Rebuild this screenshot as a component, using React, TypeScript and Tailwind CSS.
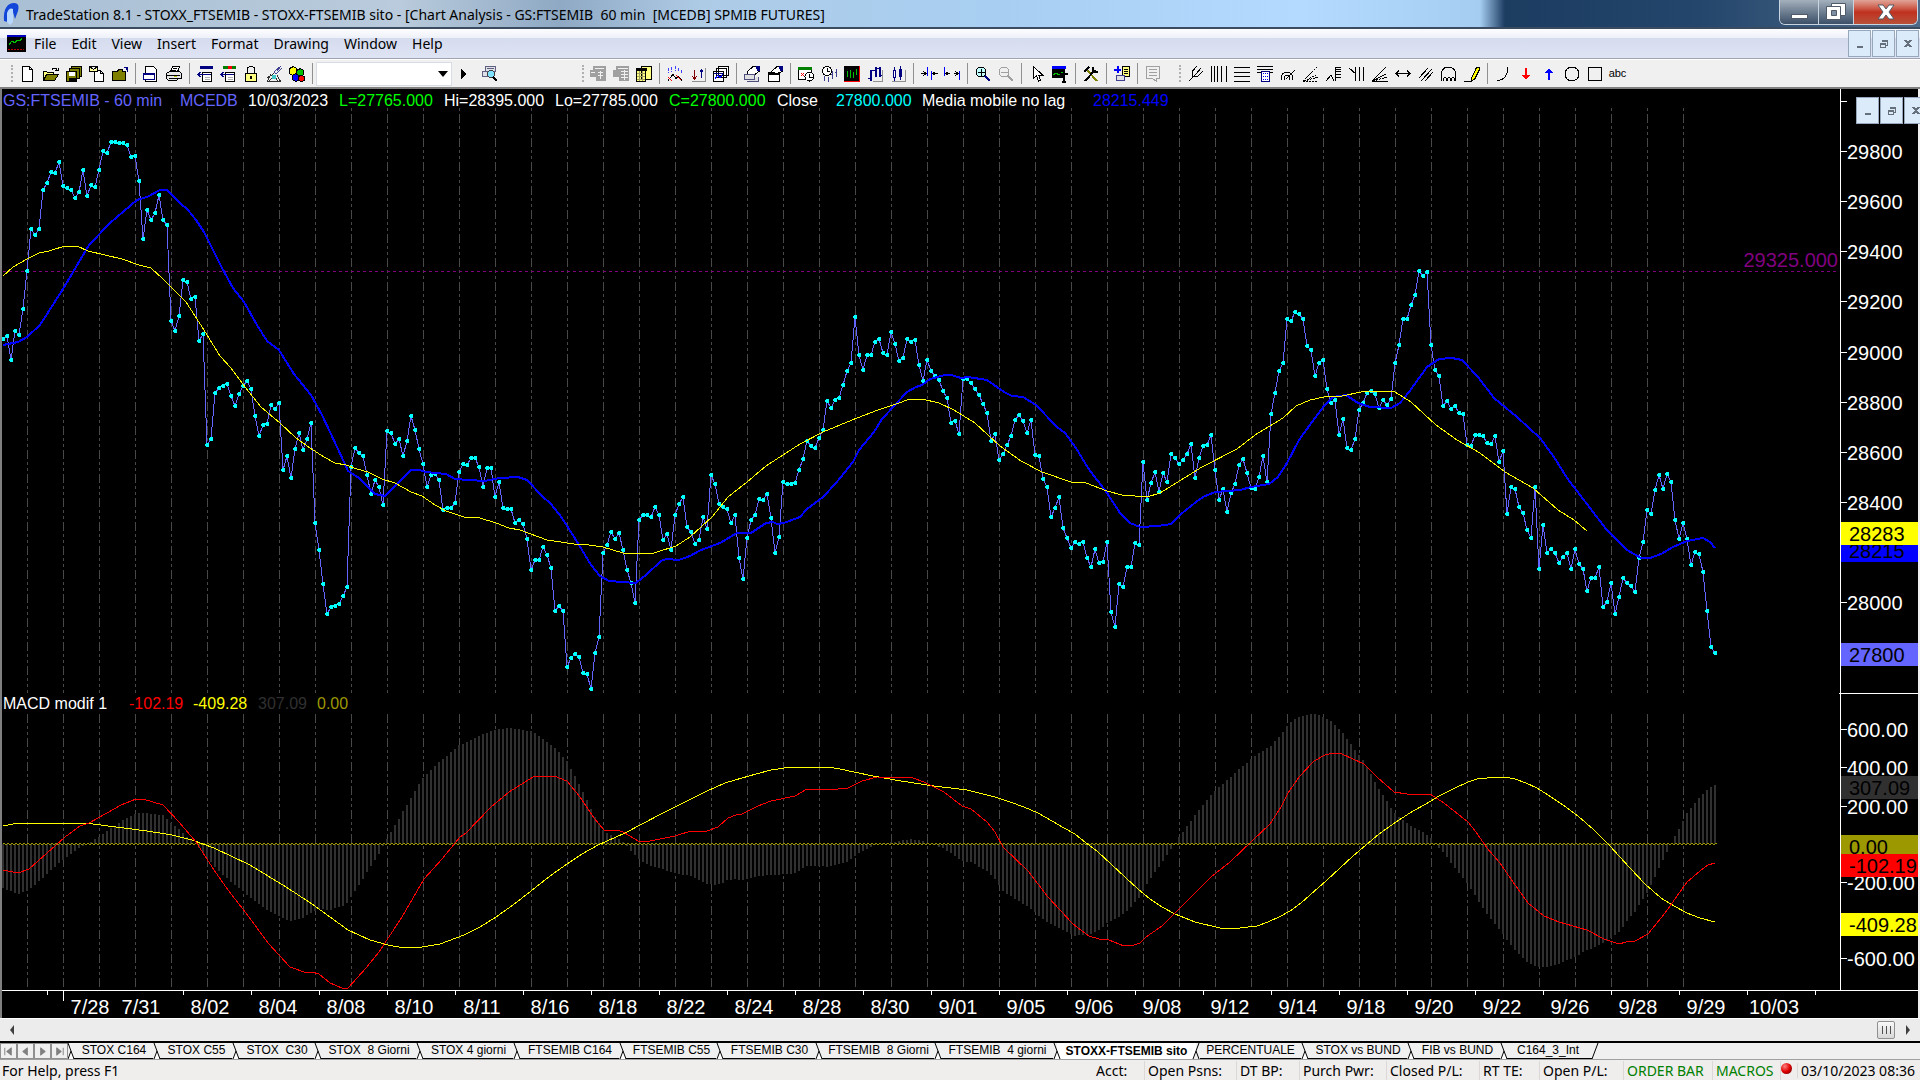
import { Fragment, ReactNode } from 'react';

// vertical position of every 60 min close, one bar each 4 units
const closes = [
  339, 336, 360, 331, 335, 309, 271, 229, 235, 229, 190, 183, 172, 173, 162, 186, 188, 190, 198, 192, 170, 196, 185,
  187, 170, 151, 153, 142, 142, 143, 143, 145, 157, 156, 181, 239, 210, 220, 213, 195, 220, 225, 321, 331, 316, 280,
  282, 299, 297, 341, 334, 445, 439, 393, 388, 386, 384, 396, 406, 394, 386, 381, 389, 416, 436, 425, 424, 405, 409,
  403, 470, 456, 478, 449, 433, 450, 439, 423, 523, 550, 584, 614, 607, 606, 604, 596, 587, 467, 448, 453, 456, 475,
  494, 480, 487, 505, 431, 433, 444, 439, 456, 441, 416, 430, 449, 464, 487, 475, 474, 480, 510, 508, 508, 503, 472,
  464, 465, 458, 458, 467, 487, 468, 468, 497, 482, 508, 509, 509, 523, 520, 524, 539, 570, 560, 560, 547, 555, 568,
  611, 606, 611, 667, 658, 654, 657, 673, 674, 689, 653, 637, 553, 545, 532, 539, 533, 550, 570, 583, 603, 520, 515,
  515, 517, 507, 515, 540, 534, 550, 515, 504, 497, 527, 532, 544, 540, 517, 529, 475, 484, 504, 507, 509, 523, 515,
  558, 579, 538, 520, 515, 499, 500, 494, 518, 553, 537, 482, 484, 484, 483, 470, 459, 441, 446, 448, 438, 430, 401,
  408, 400, 398, 385, 371, 363, 317, 355, 370, 355, 355, 342, 339, 353, 355, 332, 344, 361, 358, 339, 342, 340, 365,
  381, 360, 371, 376, 380, 391, 398, 423, 421, 434, 379, 379, 383, 389, 395, 404, 413, 441, 434, 460, 454, 445, 436,
  420, 415, 421, 433, 420, 455, 456, 479, 487, 517, 508, 497, 528, 538, 548, 542, 544, 542, 558, 567, 549, 563, 562,
  542, 612, 627, 584, 587, 567, 567, 543, 545, 462, 500, 483, 472, 492, 473, 482, 454, 458, 464, 460, 454, 444, 478,
  458, 446, 445, 435, 470, 500, 489, 512, 493, 484, 465, 459, 473, 488, 489, 477, 456, 482, 414, 393, 371, 363, 319,
  321, 312, 314, 319, 346, 350, 376, 363, 360, 389, 403, 400, 435, 419, 448, 450, 439, 410, 403, 393, 391, 394, 408,
  400, 405, 399, 363, 345, 319, 319, 305, 295, 271, 276, 272, 345, 370, 376, 406, 401, 409, 406, 413, 414, 445, 446,
  435, 435, 436, 443, 444, 436, 462, 451, 514, 487, 489, 507, 513, 530, 538, 487, 569, 525, 553, 549, 553, 563, 557,
  553, 569, 549, 564, 569, 591, 578, 578, 567, 607, 602, 583, 614, 597, 578, 583, 586, 592, 558, 542, 510, 514, 490,
  475, 489, 474, 482, 520, 539, 523, 539, 565, 552, 554, 572, 611, 647, 653,
];

const mediaMobile =
  '3,345 18,342 27,337 40,325 63,289 89,245 110,223 137,200 147,197 160,190 167,190 180,203 188,210 196,220 204,232 214,252 222,268 233,288 244,302 257,325 267,341 279,350 294,374 311,395 322,415 330,432 344,462 348,471 359,478 375,494 385,496 395,486 411,470 419,470 426,472 446,474 455,479 484,481 500,478 518,477 527,480 542,496 551,504 562,518 576,540 591,565 600,576 609,581 636,583 647,574 661,561 666,559 679,560 690,556 701,550 720,543 737,533 751,533 766,523 773,522 777,524 784,523 800,517 807,509 823,497 836,483 853,462 859,450 874,432 882,419 895,405 907,392 916,387 922,385 930,379 945,375 951,375 961,378 968,377 987,380 1004,392 1012,396 1023,397 1036,405 1057,427 1065,433 1076,448 1088,468 1107,493 1120,513 1130,523 1140,527 1158,526 1171,524 1181,514 1196,502 1203,497 1215,492 1240,490 1251,487 1269,484 1278,477 1287,463 1299,440 1312,422 1324,406 1333,397 1346,395 1358,403 1370,407 1391,408 1400,403 1409,392 1427,367 1439,359 1452,358 1462,360 1478,377 1494,398 1517,417 1540,438 1554,457 1567,478 1590,508 1606,529 1627,550 1641,558 1650,558 1661,554 1673,547 1687,541 1703,538 1710,542 1715,548';

const centred =
  '3,276 13,267 27,259 39,253 49,251 65,246 77,246 88,251 122,259 139,265 151,268 163,279 186,302 204,330 220,356 231,368 245,387 261,407 280,423 296,438 310,448 324,457 335,463 346,465 357,469 368,472 382,479 395,483 411,492 422,496 435,505 446,511 464,517 480,518 496,523 509,528 520,530 547,540 574,544 589,545 603,547 623,553 654,553 676,546 690,537 712,517 728,497 747,482 766,466 800,444 823,432 857,418 878,410 899,403 907,400 922,399 939,403 954,410 975,423 1000,446 1021,461 1042,472 1071,482 1086,483 1107,491 1122,495 1147,497 1160,493 1181,480 1202,467 1237,449 1255,435 1283,418 1296,406 1310,400 1324,397 1342,396 1361,392 1374,391 1395,392 1411,402 1436,425 1457,440 1480,453 1505,472 1533,488 1558,510 1574,520 1587,531';

const macdSlow =
  '3,826 18,823 85,823 116,827 147,831 172,835 192,840 214,848 250,865 286,887 312,904 330,917 348,930 370,940 388,945 404,948 422,947 440,944 464,935 480,927 496,917 513,905 531,891 550,876 567,864 582,854 598,845 625,833 661,814 675,807 707,791 725,783 742,778 756,774 771,770 791,767 828,767 840,769 854,772 873,776 901,781 934,786 967,790 995,797 1010,802 1024,807 1038,813 1052,821 1064,828 1075,834 1086,843 1097,851 1126,878 1138,889 1150,899 1162,907 1175,914 1195,922 1220,928 1240,928 1257,926 1268,922 1279,917 1290,911 1301,903 1327,880 1353,856 1366,845 1379,834 1396,822 1413,811 1426,804 1439,796 1453,789 1468,782 1477,779 1487,778 1505,777 1515,779 1526,783 1537,788 1548,795 1563,805 1578,816 1594,830 1609,845 1630,868 1645,884 1661,898 1674,906 1687,913 1700,918 1715,922';

const macdFast =
  '3,870 18,873 29,869 47,853 65,837 80,826 89,823 107,813 121,805 136,799 143,799 163,805 179,822 196,842 214,870 228,890 246,913 268,943 290,967 304,972 312,972 319,974 330,983 342,988 348,988 366,968 379,952 402,917 424,879 442,859 460,837 466,833 491,807 509,792 533,777 554,776 567,781 580,797 594,818 604,830 618,830 625,833 638,841 650,841 675,836 691,831 707,831 718,827 728,818 736,815 742,814 758,806 771,801 795,796 807,789 820,789 828,790 848,788 862,781 877,777 913,778 924,782 944,792 962,806 971,809 987,822 995,832 1003,847 1028,871 1048,897 1073,924 1089,936 1099,939 1109,940 1124,946 1134,945 1140,943 1146,937 1162,926 1187,901 1211,877 1230,862 1252,841 1270,824 1281,807 1288,793 1299,777 1314,761 1325,755 1333,753 1342,754 1364,764 1377,777 1394,792 1407,794 1430,794 1444,803 1468,822 1476,832 1487,848 1500,863 1513,882 1528,903 1544,916 1559,922 1587,930 1604,939 1619,944 1626,942 1635,941 1648,934 1665,913 1687,882 1700,871 1708,865 1715,863';

const barX = (index: number) => 3 + index * 4;

const parse = (points: string) => points.split(' ').map((point) => point.split(',').map(Number));

const valueAt = (points: number[][], x: number) => {
  const next = points.findIndex((point) => point[0] >= x);
  if (next <= 0) return points[0][1];
  const [x0, y0] = points[next - 1];
  const [x1, y1] = points[next];
  return y0 + ((y1 - y0) * (x - x0)) / (x1 - x0);
};

const ZERO = 844;
const slow = parse(macdSlow);
const fast = parse(macdFast);
const histogram = closes
  .map((_, index) => {
    const x = barX(index);
    const height = Math.round(valueAt(fast, x) - valueAt(slow, x));
    return `M${x - 1} ${ZERO}h2v${height}h-2z`;
  })
  .join('');
const priceLine = closes.map((y, index) => `${barX(index)},${y}`).join(' ');
const priceMarks = closes.map((y, index) => `M${barX(index) - 1} ${y - 2}h3v4h-3v-1h-1v-2h1z`).join('');

const gridLines = Array.from({ length: 47 }, (_, index) => 27 + index * 36);

const priceLabels = [
  { label: '', y: 101 },
  { label: '29800', y: 151 },
  { label: '29600', y: 201 },
  { label: '29400', y: 251 },
  { label: '29200', y: 301 },
  { label: '29000', y: 352 },
  { label: '28800', y: 402 },
  { label: '28600', y: 452 },
  { label: '28400', y: 502 },
  { label: '28000', y: 602 },
  { label: '600.00', y: 729 },
  { label: '400.00', y: 767 },
  { label: '200.00', y: 806 },
  { label: '-200.00', y: 882 },
  { label: '-600.00', y: 958 },
];

const priceTags = [
  { label: '28215', y: 539, fill: '#0000ff' },
  { label: '28283', y: 522, fill: '#ffff00' },
  { label: '27800', y: 643, fill: '#6464ff' },
  { label: '307.09', y: 776, fill: '#303030' },
  { label: '0.00', y: 835, fill: '#9c9800' },
  { label: '-102.19', y: 854, fill: '#ff0000' },
  { label: '-409.28', y: 913, fill: '#ffff00' },
];

const dateLabels = [
  '8/02', '8/04', '8/08', '8/10', '8/11', '8/16', '8/18', '8/22', '8/24', '8/28', '8/30', '9/01',
  '9/05', '9/06', '9/08', '9/12', '9/14', '9/18', '9/20', '9/22', '9/26', '9/28', '9/29', '10/03',
];

const Chart = () => (
  <svg viewBox="2 89 1916 929" className="block w-full" fontFamily="Liberation Sans, Arial, sans-serif" fontSize="20">
    <g shapeRendering="crispEdges" fill="none">
      <g stroke="#484848">
        {gridLines.map((x) => (
          <Fragment key={x}>
            <path d={`M${x + 0.5} 108V693`} strokeDasharray="9 3 3 3 3 3" strokeDashoffset="18" />
            <path d={`M${x + 0.5} 714V987`} strokeDasharray="9 3 3 3 3 3" />
          </Fragment>
        ))}
      </g>
      <path d={histogram} fill="#303030" />
      <path d="M3 843.5H1717" stroke="#9c9800" strokeDasharray="2 2" />
      <path d="M5 844.5H1717" stroke="#9c9800" strokeDasharray="2 2" />
      <path d="M3 271.5H1836" stroke="#800080" strokeDasharray="3 3" />
      <polyline points={macdSlow} stroke="#ffff00" />
      <polyline points={macdFast} stroke="#ff0000" />
      <polyline points={priceLine} stroke="#6464ff" />
      <path d={priceMarks} fill="#00ffff" />
      <polyline points={mediaMobile} stroke="#0000ff" strokeWidth="2" />
      <polyline points={centred} stroke="#ffff00" />
      <path d="M1840.5 89V990.5M2 990.5H1918M1839 693.5H1918" stroke="#ffffff" />
      <path d="M47.5 990v5M63.5 990v11" stroke="#ffffff" />
      {Array.from({ length: 25 }, (_, index) => (
        <path key={index} d={`M${183.5 + index * 68} 990v5`} stroke="#ffffff" />
      ))}
    </g>
    <text x="1838" y="267" textAnchor="end" fill="#800080">
      29325.000
    </text>
    <g fill="#ffffff">
      {priceLabels.map(({ label, y }) => (
        <Fragment key={y}>
          <rect x="1841" y={y} width="6" height="1" />
          <text x="1847" y={y + 8}>
            {label}
          </text>
        </Fragment>
      ))}
    </g>
    {priceTags.map(({ label, y, fill }) => (
      <Fragment key={label}>
        <rect x="1841" y={y} width="77" height="23" fill={fill} />
        <text x="1849" y={y + 19} fill="#000000">
          {label}
        </text>
      </Fragment>
    ))}
    <g fill="#ffffff" textAnchor="middle">
      <text x="90" y="1014">
        7/28
      </text>
      <text x="141" y="1014">
        7/31
      </text>
      {dateLabels.map((label, index) => (
        <text key={label} x={210 + index * 68} y="1014">
          {label}
        </text>
      ))}
    </g>
  </svg>
);

const Icon = ({ children, label }: { children: ReactNode; label: string }) => (
  <button type="button" aria-label={label} className="flex w-[23px] shrink-0 items-center justify-center">
    <svg viewBox="0 0 16 16" className="size-4 overflow-visible" shapeRendering="crispEdges" fill="none" stroke="#000">
      {children}
    </svg>
  </button>
);

const Separator = () => (
  <div className="flex w-2 shrink-0 justify-center py-[2px]">
    <div className="w-px bg-[#909090]" />
  </div>
);

const Grip = () => <div className="my-1 w-[2px] shrink-0 border-l-2 border-dotted border-[#b0b0b0]" />;

const MainTools = () => (
  <>
    <Icon label="New">
      <path d="M2.5 .5h7l3 3v12h-10zM9.5 .5v3h3" fill="#fff" />
    </Icon>
    <Icon label="Open">
      <path d="M.5 14.5v-9h3l1 1h6v2" fill="#ffff80" />
      <path d="M.5 14.5l3-6h12l-4 6z" fill="#808000" />
      <path d="M9 3.5q3-3 5 0M12 4.5h3v-3" />
    </Icon>
    <Icon label="Save all">
      <path d="M5.5 .5h10v10h-10z" fill="#808000" />
      <path d="M3.5 2.5h10v10h-10z" fill="#808000" />
      <path d="M.5 5.5h10v10h-10z" fill="#808000" />
      <path d="M3 6h6v4h-6z" fill="#fff" stroke="none" />
      <path d="M3 12h6v3h-6z" fill="#000" />
    </Icon>
    <Icon label="Send">
      <path d="M5.5 4.5h6l3 3v8h-9zM11.5 4.5v3h3" fill="#fff" />
      <path d="M.5 .5h8v5h-8zM.5 .5l4 3 4-3" fill="#ffffa0" />
    </Icon>
    <Icon label="Close folder">
      <path d="M.5 14.5v-9h5l1-2h4v2h3v9z" fill="#808000" />
      <path d="M15.5 6V1.5M12 1.5h4M14 3.5l2-2" stroke="#000080" />
    </Icon>
    <Separator />
    <Icon label="Page setup">
      <path d="M2.5 .5h8l3 3v12h-11z" fill="#fff" />
      <path d="M.5 7.5h11v6h-11z" fill="#fff" stroke="#000080" />
      <path d="M0 7h12v2H0z" fill="#000080" stroke="none" />
    </Icon>
    <Icon label="Print">
      <path d="M4.5 6l2-5.5h7l-2 5.5M7 2.5h4M6 4.5h4" fill="#fff" />
      <path d="M.5 7.5l3-2h10l2 2v5h-3l-2 2h-8l-2-2z" fill="#e8e8e8" />
      <path d="M1 9.5h13M3 12.5h9" />
      <path d="M8 10.5h3" stroke="#c0c000" />
    </Icon>
    <Separator />
    <Icon label="Insert row">
      <path d="M3 0h13v3H3z" fill="#000080" stroke="none" />
      <path d="M5.5 6.5h9v9h-9z" fill="#fff" />
      <path d="M5 8h9M8 8.5H1M3.5 6L1 8.5 3.5 11" stroke="#000080" />
      <path d="M8 11.5h5M8 13.5h5" stroke="#b0b0b0" />
    </Icon>
    <Icon label="Format row">
      <path d="M3 0h5v3H3zM12 0h4v3h-4z" fill="#008000" stroke="none" />
      <path d="M8 0h4v3H8z" fill="#ff0000" stroke="none" />
      <path d="M5.5 6.5h9v9h-9z" fill="#fff" />
      <path d="M5 8h9M8 8.5H1M3.5 6L1 8.5 3.5 11" stroke="#000080" />
      <path d="M8 11.5h5M8 13.5h5" stroke="#b0b0b0" />
    </Icon>
    <Icon label="Lock">
      <path d="M4.5 7V3q0-2.5 3.5-2.5T11.5 3v4" />
      <path d="M2.5 7.5h11v8h-11z" fill="#ffff80" />
      <path d="M7 10h2v3H7z" fill="#000" stroke="none" />
    </Icon>
    <Icon label="Satellite">
      <path d="M15 0L8 6l2 2 6-6M11 5l3-3" stroke="#404090" />
      <path d="M8 7.5L1 12M5 8L1.5 15.500h13L11 9M3 15l5-5 4 5" stroke="#303030" />
      <path d="M6 9h4v4H6z" fill="#40c8c8" stroke="none" />
    </Icon>
    <Icon label="Color blocks">
      <path d="M.5 2.5l4-2 3 2v5l-4 2-3-2z" fill="#ffff00" />
      <path d="M7.5 4.5l4-2 3 2v4l-3 2-4-2z" fill="#00c000" />
      <path d="M3.5 9.5l3-2 3 2v5l-3 1-3-2z" fill="#0000ff" />
      <path d="M9.5 10.5l3-1 3 1v4l-3 1-3-1z" fill="#ff0000" />
    </Icon>
    <Separator />
  </>
);

const ChartTools = () => (
  <>
    <Icon label="Quote">
      <path d="M3 0h13v15H6v-4H0V4h3z" fill="#a0a0a0" stroke="none" />
      <path d="M5 2h9M1 6h4M8 6.5h5M8 9.5h5M10.5 5v8" stroke="#f0f0f0" />
    </Icon>
    <Icon label="Orders">
      <path d="M3 0h13v15H6v-4H0V4h3z" fill="#a0a0a0" stroke="none" />
      <path d="M5 2.5h10M8 5.5h7M8 8.5h7M8 11.5h7M11.5 4v10" stroke="#f0f0f0" />
    </Icon>
    <Icon label="Table">
      <path d="M5.5 .5h10v13h-10zM.5 2.5h9v13h-9z" fill="#ffff80" />
      <path d="M0 2h10v2H0z" fill="#000" />
      <path d="M3.5 5v10M6.5 5v10M1 7.5h8M1 10.5h8M1 13.5h8" stroke="#a0a060" />
    </Icon>
    <Separator />
    <Icon label="Indicator">
      <path d="M1.5 2v5M4.5 1v5M8.5 0v5M11.5 2v4M14.5 4v4" stroke="#4040ff" strokeDasharray="3 1" />
      <path d="M1 14.5l5-6 3 4 2-2 4 4" />
      <path d="M1 11l4 4M9 9l5 5" stroke="#ff0000" />
    </Icon>
    <Icon label="Trades">
      <path d="M4.5 4v9M2.5 10.5l2 2.5 2-2.5" stroke="#800000" />
      <path d="M11.5 12V4M9.5 6.5l2-2.5 2 2.5" stroke="#000080" />
      <path d="M15.5 2v13.5H2" stroke="#909090" />
    </Icon>
    <Icon label="Windows">
      <path d="M5.5 .5h10v9h-10zM3.5 2.5h10v9h-10zM.5 5.5h10v10h-10z" fill="#fff" />
      <path d="M1 7h9" stroke="#000080" />
      <path d="M2 13l3-4 2 3 3-4" stroke="#0000ff" />
    </Icon>
    <Separator />
    <Icon label="Format symbol">
      <path d="M3 6l6-5.5h6v5l-4 3-6 1z" fill="#fff" />
      <path d="M12 0h4v5h-3z" fill="#000080" stroke="none" />
      <path d="M.5 8.5h10v5h-10zM3 15.5h11v-5" stroke="#505080" fill="#e0e0e0" />
    </Icon>
    <Icon label="Format window">
      <path d="M1.5 6.5h11v9h-11z" fill="#fff" />
      <path d="M1 6h12v3H1z" fill="#000" stroke="none" />
      <path d="M4 6l6-5.5h5v5l-5 2z" fill="#fff" />
      <path d="M12 0h4v5h-3z" fill="#000080" stroke="none" />
    </Icon>
    <Separator />
    <Icon label="Session">
      <path d="M.5 2.5h13v11H.5z" fill="#fff" />
      <path d="M0 1h14v3H0z" fill="#008000" stroke="none" />
      <path d="M3 7l3 3M3 10l3-3" stroke="#ff0000" />
      <circle cx="11.5" cy="10.5" r="4.5" fill="#fff" />
      <path d="M11.5 8v3h3" />
    </Icon>
    <Icon label="Interval">
      <circle cx="6" cy="5" r="4.5" fill="#fff" />
      <path d="M6 2v3h3" />
      <path d="M3.5 10v5M7.5 11v5M11.5 5v8M15.5 3v8M10 8h2M14 6h2" stroke="#404090" />
    </Icon>
    <Icon label="Bar chart">
      <path d="M0 0h15v15H0z" fill="#000" stroke="none" />
      <path d="M3.5 5v6M6.5 4v8M9.5 6v6M12.5 3v6" stroke="#00c000" />
      <path d="M0 15.5h15.5V0" stroke="#ff0000" />
    </Icon>
    <Icon label="Candle">
      <path d="M3.5 4v11M8.5 1v10M12.5 1v10" stroke="#000080" strokeWidth="2" />
      <path d="M1 12.5h3M5 4.5h3M9 2.5h4M12 9.5h3" stroke="#000080" />
      <path d="M15.5 4v11.5H6" stroke="#909090" />
    </Icon>
    <Icon label="Candlestick">
      <path d="M4.5 1v14M10.5 0v14" stroke="#000080" />
      <path d="M3.5 4.5h2v7h-2z" fill="#fff" stroke="#000080" />
      <path d="M9 3h3v8H9z" fill="#000080" stroke="none" />
      <path d="M15.5 4v11.5H2" stroke="#909090" />
    </Icon>
    <Separator />
    <Icon label="Decrease spacing">
      <path d="M6.5 1v9M10.5 5v9" stroke="#0000ff" />
      <path d="M0 7.5h4M2.5 5.5L5 7.5l-2.5 2M17 7.5h-4M14.5 5.5L12 7.5l2.5 2" />
    </Icon>
    <Icon label="Increase spacing">
      <path d="M.5 1v9M15.5 5v9" stroke="#0000ff" />
      <path d="M2 7.5h4M4.5 5.5L2 7.5l2.5 2M14 7.5h-4M11.5 5.5l2.5 2-2.5 2" />
    </Icon>
    <Separator />
    <Icon label="Zoom in">
      <circle cx="6" cy="6" r="5" fill="#c0ffff" />
      <path d="M3 6.5h7M6.5 3v7" stroke="#000" />
      <path d="M10 10l5 5" stroke="#000080" strokeWidth="2" />
    </Icon>
    <Icon label="Zoom out">
      <circle cx="6" cy="6" r="5" stroke="#a0a0a0" />
      <path d="M3 6.5h7" stroke="#a0a0a0" />
      <path d="M10 10l5 5" stroke="#a0a0a0" strokeWidth="2" />
    </Icon>
    <Separator />
    <Icon label="Pointer">
      <path d="M4.5 .5v12l3-3 2 5.500 2-1-2-5h4z" fill="#fff" />
    </Icon>
    <Icon label="Text window">
      <path d="M0 0h13v12H0z" fill="#000" stroke="none" />
      <path d="M0 0h14v3H0z" fill="#0000ff" stroke="none" />
      <path d="M1 9l3-2 3 2 4-3" stroke="#00c000" />
      <path d="M8 8h8M12 8v8M10 15.5h4" strokeWidth="2" />
    </Icon>
    <Separator />
    <Icon label="Tools">
      <path d="M4 4l10 11" stroke="#808000" strokeWidth="2" />
      <path d="M12 4L2 15" stroke="#000" strokeWidth="2" />
      <path d="M1 6l5-5M10 1v3l2 2h3" strokeWidth="2" />
    </Icon>
    <Separator />
    <Icon label="Add page">
      <path d="M8.5 .5h7v10h-7z" fill="#ffff80" />
      <path d="M10 3.5h4M10 5.5h4M10 7.5h4" />
      <path d="M3.5 0v7M0 3.5h7" stroke="#0000ff" strokeWidth="2" />
      <path d="M2.5 9.5h8v5h-8z" fill="#e0e0e0" stroke="#404090" />
    </Icon>
    <Separator />
    <Icon label="Notes">
      <path d="M1.5 .5h13v12h-3v3l-4-3h-6z" stroke="#a0a0a0" />
      <path d="M4 3.5h8M4 6.5h8M4 9.5h8" stroke="#a0a0a0" />
    </Icon>
  </>
);

const DrawingTools = () => (
  <>
    <Icon label="Pitchfork">
      <path d="M1 15L8 8M4.5 5v5.500h5M4.5 5L9 0M9.5 10.500L15 5M8 8l5-6" />
    </Icon>
    <Icon label="Vertical lines">
      <path d="M.5 0v16M3.5 0v16M6.5 0v16M10.5 0v16M15.5 0v16" />
    </Icon>
    <Icon label="Horizontal lines">
      <path d="M0 1.5h16M0 6.5h16M0 10.5h16M0 15.5h16" />
    </Icon>
    <Icon label="Calculator">
      <path d="M0 .5h16M0 3.5h16M0 6.5h16" />
      <path d="M4.5 5.5h8v10h-8z" fill="#fff" stroke="#000080" />
      <path d="M6 7.5h5M6 10.5h5M6 13.5h5" stroke="#0000ff" strokeDasharray="1 1" />
    </Icon>
    <Icon label="Arcs">
      <path d="M1 14q0-8 6-8t6 8M4 14q0-5 3-5t3 5M6 13L15 4" />
    </Icon>
    <Icon label="Fan">
      <path d="M0 15.5h15M0 15L14 1M1 15l14-7M1 15l14-4" strokeDasharray="2 1" />
    </Icon>
    <Icon label="Retracement">
      <path d="M0 15l5-6 3 6M9.5 15V1.5H15M10 5.5h5M10 8.5h5M10 11.5h5M10 3.5h5" />
    </Icon>
    <Icon label="Time lines">
      <path d="M0 2l7 6M6.5 1v14M10.5 1v14M14.5 1v14" />
    </Icon>
    <Icon label="Speed lines">
      <path d="M0 15.5h16M0 15L14 1M0 15l14-7" />
      <path d="M1 15l14-4" strokeDasharray="2 1" />
    </Icon>
    <Icon label="Extend">
      <path d="M1 7.5h14M4 4.5l-3 3 3 3M12 4.5l3 3-3 3" />
    </Icon>
    <Icon label="Parallel">
      <path d="M1 12l9-10M3 15L14 3M7 15l8-9" />
    </Icon>
    <Icon label="Cycles">
      <path d="M.5 15V7q1-6 7-6t7 6v8M2 15q2-8 4 0M6 15q2-8 4 0M10 15q2-8 4 0" />
    </Icon>
    <Icon label="Pencil">
      <path d="M7.5 12.5l5-11h3v2l-5 10-3 1z" fill="#ffff00" />
      <path d="M0 15.5h8" />
    </Icon>
    <Separator />
    <Icon label="Arc">
      <path d="M2 14.5q10 0 11-13" />
    </Icon>
    <Icon label="Down arrow">
      <path d="M8 2v8" stroke="#ff0000" strokeWidth="2" />
      <path d="M4 9h8l-4 5z" fill="#ff0000" stroke="none" />
    </Icon>
    <Icon label="Up arrow">
      <path d="M8 6v8" stroke="#0000ff" strokeWidth="2" />
      <path d="M4 7h8L8 2z" fill="#0000ff" stroke="none" />
    </Icon>
    <Icon label="Ellipse">
      <circle cx="8" cy="8" r="7" />
    </Icon>
    <Icon label="Rectangle">
      <path d="M1.5 1.5h13v13h-13z" />
    </Icon>
    <button type="button" className="w-[23px] text-center font-['Liberation_Sans',Arial,sans-serif] text-[11px]">
      abc
    </button>
  </>
);

const menus = ['File', 'Edit', 'View', 'Insert', 'Format', 'Drawing', 'Window', 'Help'];

const MdiButtons = () => (
  <>
    {['Minimize', 'Restore', 'Close'].map((label) => (
      <button
        key={label}
        type="button"
        aria-label={label}
        className="flex h-[27px] w-[23px] shrink-0 items-center justify-center border border-[#98a8bc] bg-[#dcebfa]">
        <svg viewBox="0 0 10 10" className="size-[10px]" stroke="#66707c" fill="none" shapeRendering="crispEdges">
          {label === 'Minimize' && <path d="M2 8h6" strokeWidth="2" />}
          {label === 'Restore' && <path d="M3.5 3V1.5h5v5H7M1.5 4.5h5v4h-5zM1 5h6M3 2h6" />}
          {label === 'Close' && <path d="M2 1l6 7M8 1L2 8" strokeWidth="2" />}
        </svg>
      </button>
    ))}
  </>
);

const TitleBar = () => (
  <header className="flex h-[29px] items-center justify-between border-b-2 border-[#3c4c60] bg-[linear-gradient(90deg,#a9bfd4_0px,#b9cbdc_400px,#8fa9c4_560px,#aecbe6_700px,#a8cff2_1000px,#b4daff_1300px,#a5cdf2_1480px,#1c3c60_1505px,#24466c_1700px,#4f6a88_1920px)] pl-[3px]">
    <div className="flex items-center gap-[7px]">
      <svg viewBox="0 0 16 24" className="h-6 w-4">
        <path d="M1 19C0 6 5 1 11 1c5 0 5 4 4 8l-3 8-2-7-3 1 1 10z" fill="#1246d8" />
        <path d="M4 20V11q2-6 6-4v13l-3 3z" fill="#b8d8ff" />
      </svg>
      <h1 className="pt-[2px] text-[14px] leading-5 whitespace-pre text-black">
        TradeStation 8.1 - STOXX_FTSEMIB - STOXX-FTSEMIB sito - [Chart Analysis - GS:FTSEMIB{'  '}60 min{'  '}[MCEDB]
        SPMIB FUTURES]
      </h1>
    </div>
    <div className="mr-[2px] mb-[3px] flex h-[25px] overflow-hidden rounded-b-md border border-t-0 border-[#c8d4e0]">
      <button
        type="button"
        aria-label="Minimize"
        className="flex w-[38px] items-end justify-center bg-linear-to-b from-[#a4b0bc] to-[#3c5068] pb-[5px]">
        <span className="h-[5px] w-[17px] border border-[#505a68] bg-white" />
      </button>
      <button
        type="button"
        aria-label="Restore"
        className="flex w-[36px] items-center justify-center border-x border-[#c8d4e0] bg-linear-to-b from-[#a4b0bc] to-[#3c5068]">
        <svg viewBox="0 0 20 17" className="h-[17px] w-5" fill="#fff" stroke="#505a68">
          <path d="M5.5 .5h14v12h-14z" />
          <path d="M.5 3.5h14v13H.5z" />
          <path d="M5.5 7.5h5v5h-5z" fill="#8090a4" />
        </svg>
      </button>
      <button
        type="button"
        aria-label="Close"
        className="flex w-[63px] items-center justify-center bg-linear-to-b from-[#e0a498] via-[#c03020] to-[#b85038]">
        <svg viewBox="0 0 18 16" className="h-4 w-[18px]">
          <path d="M1 1h5l3 4 3-4h5l-5 7 5 7h-5l-3-4-3 4H1l5-7z" fill="#fff" stroke="#505a68" />
        </svg>
      </button>
    </div>
  </header>
);

const MenuBar = () => (
  <nav className="flex h-[30px] items-center justify-between border-b border-[#a0a4b0] bg-[linear-gradient(180deg,#fdfdff_0%,#eef1f9_30%,#d5dcee_32%,#dfe4f4_100%)]">
    <div className="flex items-center gap-2 pl-[7px]">
      <svg viewBox="0 0 19 17" className="h-[17px] w-[19px]" shapeRendering="crispEdges" fill="none">
        <path d="M0 0h19v17H0z" fill="#000" />
        <path d="M0 0h19v2H0z" fill="#0000c0" />
        <path d="M2 10l3-4 3 2 2-3 3 1 2-3" stroke="#00c000" />
        <path d="M1 14.5h16" stroke="#c00000" strokeDasharray="2 1" />
      </svg>
      <ul className="flex items-center gap-[15px] text-[14px] leading-5">
        {menus.map((menu) => (
          <li key={menu}>
            <button type="button">{menu}</button>
          </li>
        ))}
      </ul>
    </div>
    <div className="flex gap-px pr-px">
      <MdiButtons />
    </div>
  </nav>
);

const ToolBar = () => (
  <div className="flex h-[30px] border-t border-b-2 border-[#808080] border-t-white bg-[#f0f0f0] py-px">
    <div className="flex w-[582px] shrink-0 pl-[11px]">
      <Grip />
      <div className="w-[3px]" />
      <MainTools />
      <div className="relative flex w-[136px] shrink-0 items-center">
        <select aria-label="Symbol" className="h-6 w-full appearance-none border border-[#d8dce4] bg-white" />
        <svg viewBox="0 0 10 6" className="pointer-events-none absolute right-1 h-[6px] w-[10px]">
          <path d="M0 0h10L5 6z" />
        </svg>
      </div>
      <Icon label="Go">
        <path d="M5 3v10l5-5z" fill="#000" stroke="none" />
      </Icon>
      <div className="w-[3px]" />
      <Icon label="Look up">
        <path d="M.5 5.5h5v5h-5zM3.5 .5h10v5h-10zM5 2.5h7" stroke="#606080" fill="#e0e0e8" />
        <circle cx="9" cy="8" r="3.5" fill="#80e0ff" stroke="#404040" />
        <path d="M11 11l4 4" strokeWidth="2" />
      </Icon>
    </div>
    <div className="flex w-[597px] shrink-0">
      <Grip />
      <div className="w-[2px]" />
      <ChartTools />
    </div>
    <div className="flex">
      <Grip />
      <div className="w-[3px]" />
      <DrawingTools />
    </div>
  </div>
);

const ChartWindow = () => (
  <section className="relative mr-[2px] border-l-2 border-[#808080] bg-black font-['Liberation_Sans',Arial,sans-serif] text-[16px] leading-[19px]">
    <Chart />
    <div className="absolute top-[2px] left-0 grid grid-cols-[177px_68px_91px_105px_111px_114px_108px_59px_86px_171px_auto] pl-px whitespace-pre text-white">
      <span className="text-[#6464ff]">GS:FTSEMIB - 60 min</span>
      <span className="text-[#6464ff]">MCEDB</span>
      <span>10/03/2023</span>
      <span className="text-[#00ff00]">L=27765.000</span>
      <span>Hi=28395.000</span>
      <span>Lo=27785.000</span>
      <span className="text-[#00ff00]">C=27800.000</span>
      <span>Close</span>
      <span className="text-[#00ffff]">27800.000</span>
      <span>Media mobile no lag</span>
      <span className="text-[#0000ff]">28215.449</span>
    </div>
    <div className="absolute top-[65%] left-0 grid grid-cols-[126px_64px_65px_59px_auto] pt-px pl-px text-white">
      <span>MACD modif 1</span>
      <span className="text-[#ff0000]">-102.19</span>
      <span className="text-[#ffff00]">-409.28</span>
      <span className="text-[#303030]">307.09</span>
      <span className="text-[#9c9800]">0.00</span>
    </div>
    <div className="absolute top-2 -right-[9px] flex gap-px">
      <MdiButtons />
    </div>
  </section>
);

const sheets = [
  { name: 'STOX C164', width: 'w-[86px]' },
  { name: 'STOX C55', width: 'w-[79px]' },
  { name: 'STOX  C30', width: 'w-[82px]' },
  { name: 'STOX  8 Giorni', width: 'w-[102px]' },
  { name: 'STOX 4 giorni', width: 'w-[97px]' },
  { name: 'FTSEMIB C164', width: 'w-[106px]' },
  { name: 'FTSEMIB C55', width: 'w-[97px]' },
  { name: 'FTSEMIB C30', width: 'w-[99px]' },
  { name: 'FTSEMIB  8 Giorni', width: 'w-[119px]' },
  { name: 'FTSEMIB  4 giorni', width: 'w-[119px]' },
  { name: 'STOXX-FTSEMIB sito', width: 'w-[139px]', active: true },
  { name: 'PERCENTUALE', width: 'w-[109px]' },
  { name: 'STOX vs BUND', width: 'w-[106px]' },
  { name: 'FIB vs BUND', width: 'w-[93px]' },
  { name: 'C164_3_Int', width: 'w-[88px]' },
];

const navArrows = ['M3 3v8M10 3v8L5 7z', 'M9 3v8L4 7z', 'M5 3v8l5-4z', 'M11 3v8M4 3v8l5-4z'];

const SheetTabs = () => (
  <div className="flex h-[18px] border-t-2 border-black bg-[#f0f0f0] font-['Liberation_Sans',Arial,sans-serif] text-[12px]">
    <div className="flex w-[71px] shrink-0">
      {navArrows.map((d) => (
        <button
          key={d}
          type="button"
          aria-label="Scroll sheets"
          className="flex w-[17px] items-center justify-center border border-[#909090] bg-[#f0f0f0]">
          <svg viewBox="0 0 14 14" className="size-[13px]" fill="#808080" stroke="#808080">
            <path d={d} />
          </svg>
        </button>
      ))}
    </div>
    {sheets.map(({ name, width, active }, index) => (
      <button
        key={name}
        type="button"
        className={`${width} ${active ? 'bg-white font-bold' : 'border-b'} relative shrink-0 border-black text-center leading-[15px] whitespace-pre`}>
        <svg viewBox="0 0 8 16" className="absolute top-0 -left-1 h-4 w-2" fill="none" stroke="#000">
          {sheets[index - 1]?.active ? (
            <>
              <path d="M7 0h1v16H1z" fill="#f0f0f0" stroke="none" />
              <path d="M7 0L1 16M4 8l3 8" />
            </>
          ) : (
            <>
              <path d="M0 16L4 8 7 16z" fill="#fff" stroke="none" />
              <path d="M1 0l6 16M1 16l3-8" />
            </>
          )}
        </svg>
        {name}
      </button>
    ))}
    <svg viewBox="0 0 8 16" className="h-4 w-2" fill="none" stroke="#000">
      <path d="M6 0L0 16" />
    </svg>
  </div>
);

const statusItems = [
  { label: 'Acct:', width: 'w-[52px]' },
  { label: 'Open Psns:', width: 'w-[92px]' },
  { label: 'DT BP:', width: 'w-[63px]' },
  { label: 'Purch Pwr:', width: 'w-[87px]' },
  { label: 'Closed P/L:', width: 'w-[93px]' },
  { label: 'RT TE:', width: 'w-[60px]' },
  { label: 'Open P/L:', width: 'w-[84px]' },
];

const StatusBar = () => (
  <footer className="flex h-[21px] items-center border-t border-[#a0a0a0] bg-[#f0eded] text-[14px] leading-[19px] whitespace-nowrap">
    <p className="flex-1 pl-[2px]">For Help, press F1</p>
    {statusItems.map(({ label, width }) => (
      <span key={label} className={`${width} border-r border-[#dcd8d8] pl-[3px]`}>
        {label}
      </span>
    ))}
    <span className="w-[89px] border-r border-[#dcd8d8] pl-[3px] text-[#008000]">ORDER BAR</span>
    <span className="w-[68px] border-r border-[#dcd8d8] pl-[3px] text-[#008000]">MACROS</span>
    <span className="flex w-[17px] items-center border-r border-[#dcd8d8] pb-1">
      <span className="size-[11px] rounded-full bg-radial-[at_35%_30%] from-[#ff8080] via-[#e00000] to-[#500000]" />
    </span>
    <time className="w-[122px] pl-[3px]">03/10/2023 08:36</time>
  </footer>
);

const App = () => {
  return (
    <main className="min-h-screen overflow-x-hidden bg-[#f0f0f0] font-['Noto_Sans','Open_Sans',sans-serif] text-black">
      <TitleBar />
      <MenuBar />
      <ToolBar />
      <ChartWindow />
      <div className="flex h-[23px] items-center justify-between border-t border-white bg-[#ececec] px-[7px]">
        <button type="button" aria-label="Scroll left">
          <svg viewBox="0 0 10 10" className="size-[10px]" fill="#404040">
            <path d="M7 0v10L3 5z" />
          </svg>
        </button>
        <div className="flex items-center gap-2">
          <button
            type="button"
            aria-label="Scroll thumb"
            className="flex h-[18px] w-[18px] items-center justify-center gap-[3px] rounded-xs border border-[#909090] bg-linear-to-b from-[#f8f8f8] to-[#d8d8d8]">
            <span className="h-2 w-px bg-[#505050]" />
            <span className="h-2 w-px bg-[#505050]" />
            <span className="h-2 w-px bg-[#505050]" />
          </button>
          <button type="button" aria-label="Scroll right">
            <svg viewBox="0 0 10 10" className="size-[10px]" fill="#404040">
              <path d="M3 0v10l4-5z" />
            </svg>
          </button>
        </div>
      </div>
      <SheetTabs />
      <StatusBar />
    </main>
  );
};

export default App;
